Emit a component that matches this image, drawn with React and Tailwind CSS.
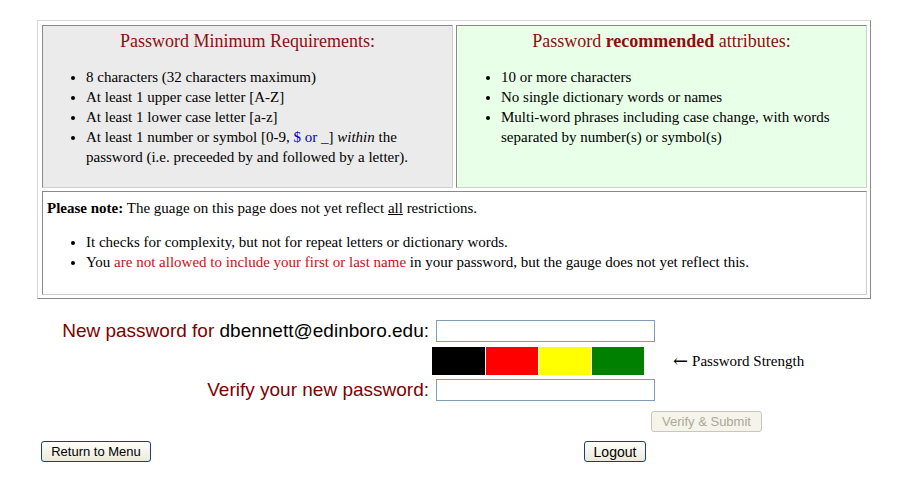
export default function App() {
  const serif = { fontFamily: '"Liberation Serif", "Times New Roman", serif' };
  const sans = { fontFamily: '"Liberation Sans", Arial, sans-serif' };
  const xpBtn =
    "h-[21px] rounded-[3px] border border-[#1c3f6e] bg-gradient-to-b from-white to-[#ece9d8] text-[13px] leading-none text-black flex items-center justify-center";
  return (
    <div className="w-[901px] h-[495px] bg-white relative overflow-hidden" style={serif}>
      <div className="pt-[20px] pl-[37px]">
        {/* outer table */}
        <div className="w-[834px] border border-t-[#d6d6d6] border-l-[#d6d6d6] border-b-[#8a8a8a] border-r-[#8a8a8a] pl-[4px] pr-[3px] pt-[4px] pb-[3px] text-[15px] leading-[20px] text-black">
          <div className="grid grid-cols-[411px_411px] gap-x-[3px] gap-y-[3px]">
            {/* cell 1 */}
            <div className="h-[163px] bg-[#ebebeb] border border-t-[#8a8a8a] border-l-[#8a8a8a] border-b-[#d0d0d0] border-r-[#d0d0d0] pt-[5px] px-[4px]">
              <div className="text-center text-[18px] leading-[21px] text-[#8f0f0f]">
                Password Minimum Requirements:
              </div>
              <ul className="list-disc mt-[15px] pl-[39px]">
                <li>8 characters (32 characters maximum)</li>
                <li>At least 1 upper case letter [A-Z]</li>
                <li>At least 1 lower case letter [a-z]</li>
                <li>
                  At least 1 number or symbol [0-9, <span className="text-[#0000cc]">$ or _</span>]{" "}
                  <i>within</i> the password (i.e. preceeded by and followed by a letter).
                </li>
              </ul>
            </div>
            {/* cell 2 */}
            <div className="h-[163px] bg-[#e8ffe8] border border-t-[#8a8a8a] border-l-[#8a8a8a] border-b-[#d0d0d0] border-r-[#d0d0d0] pt-[5px] px-[4px]">
              <div className="text-center text-[18px] leading-[21px] text-[#8f0f0f]">
                Password <b>recommended</b> attributes:
              </div>
              <ul className="list-disc mt-[15px] pl-[40px]">
                <li>10 or more characters</li>
                <li>No single dictionary words or names</li>
                <li>
                  Multi-word phrases including case change, with words separated by number(s) or
                  symbol(s)
                </li>
              </ul>
            </div>
            {/* cell 3 */}
            <div className="col-span-2 h-[104px] bg-white border border-t-[#8a8a8a] border-l-[#8a8a8a] border-b-[#d0d0d0] border-r-[#d0d0d0] pt-[6px] px-[4px]">
              <div>
                <b>Please note:</b> The guage on this page does not yet reflect <u>all</u>{" "}
                restrictions.
              </div>
              <ul className="list-disc mt-[14px] pl-[39px]">
                <li>It checks for complexity, but not for repeat letters or dictionary words.</li>
                <li>
                  You{" "}
                  <span className="text-[#cc1111]">
                    are not allowed to include your first or last name
                  </span>{" "}
                  in your password, but the gauge does not yet reflect this.
                </li>
              </ul>
            </div>
          </div>
        </div>
      </div>

      {/* form */}
      <div className="mt-[21px] flex flex-col" style={sans}>
        <div className="flex items-center h-[22px]">
          <div className="w-[429px] text-right text-[19px] leading-[22px] text-[#800000] whitespace-nowrap">
            New password for <span className="text-black">dbennett@edinboro.edu:</span>
          </div>
          <div className="ml-[7px] w-[219px] h-[22px] border border-[#7f9db9] bg-white" />
        </div>
        <div className="flex items-center h-[28px] mt-[5px]">
          <div className="ml-[432px] flex gap-[1px]">
            <div className="w-[53px] h-[28px] bg-black" />
            <div className="w-[52px] h-[28px] bg-[#ff0000]" />
            <div className="w-[52px] h-[28px] bg-[#ffff00]" />
            <div className="w-[52px] h-[28px] bg-[#008000]" />
          </div>
          <div className="ml-[29px] flex items-center text-[15px] leading-[20px] text-black whitespace-nowrap" style={serif}>
            <span className="text-[18px] leading-[20px]" style={{ fontFamily: '"DejaVu Serif", serif' }}>←</span>
            <span className="ml-[4px]">Password Strength</span>
          </div>
        </div>
        <div className="flex items-center h-[22px] mt-[4px]">
          <div className="w-[429px] text-right text-[19px] leading-[22px] text-[#800000] whitespace-nowrap">
            Verify your new password:
          </div>
          <div className="ml-[7px] w-[219px] h-[22px] border border-[#7f9db9] bg-white" />
        </div>
        <div className="flex h-[21px] mt-[10px]">
          <div className="ml-[651px] w-[111px] h-[21px] rounded-[3px] border border-[#c9c7ba] bg-[#f5f4ea] text-[13px] leading-none text-[#aca899] flex items-center justify-center">
            Verify &amp; Submit
          </div>
        </div>
        <div className="flex h-[21px] mt-[9px]">
          <div className={`ml-[41px] w-[110px] ${xpBtn}`}>Return to Menu</div>
          <div className={`ml-[433px] w-[62px] ${xpBtn} text-[14px]`}>Logout</div>
        </div>
      </div>
    </div>
  );
}
